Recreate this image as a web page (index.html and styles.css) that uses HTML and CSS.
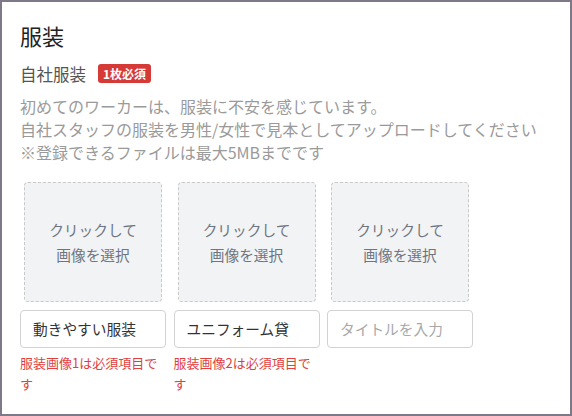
FILE: index.html
```html
<!DOCTYPE html>
<html lang="ja">
<head>
<meta charset="utf-8">
<link rel="stylesheet" href="styles.css">
</head>
<body>
<div class="frame">
  <h2 class="title">服装</h2>
  <div class="label-row">
    <span class="label">自社服装</span>
    <span class="badge">1枚必須</span>
  </div>
  <p class="desc">初めてのワーカーは、服装に不安を感じています。<br>自社スタッフの服装を男性/女性で見本としてアップロードしてください<br>※登録できるファイルは最大5MBまでです</p>
  <div class="grid">
    <div class="col">
      <div class="drop">クリックして<br>画像を選択</div>
      <input class="field" type="text" value="動きやすい服装">
      <div class="error">服装画像1は必須項目です</div>
    </div>
    <div class="col">
      <div class="drop">クリックして<br>画像を選択</div>
      <input class="field" type="text" value="ユニフォーム貸">
      <div class="error">服装画像2は必須項目です</div>
    </div>
    <div class="col">
      <div class="drop">クリックして<br>画像を選択</div>
      <input class="field" type="text" placeholder="タイトルを入力">
    </div>
  </div>
</div>
</body>
</html>
```

FILE: styles.css
```css
* { box-sizing: border-box; }
html, body { margin: 0; padding: 0; background: #fff; }
body {
  font-family: "Noto Sans CJK JP", "Noto Sans", sans-serif;
  color: #333;
}
.frame {
  width: 572px;
  height: 416px;
  border: 2px solid #7f7889;
  padding: 18px;
  overflow: hidden;
}
.title {
  margin: 0;
  font-size: 22px;
  font-weight: 400;
  line-height: 30px;
  color: #222;
}
.label-row {
  display: flex;
  align-items: center;
  height: 23px;
  margin-top: 12px;
}
.label {
  font-size: 16.5px;
  color: #555;
}
.badge {
  margin-left: 12px;
  background: #d63a36;
  color: #fff;
  font-size: 12px;
  font-weight: 700;
  height: 19px;
  line-height: 19px;
  padding: 0 5px;
  border-radius: 3px;
}
.desc {
  margin: 10px 0 0;
  font-size: 16px;
  line-height: 23.2px;
  color: #9a9a9a;
  white-space: nowrap;
}
.grid {
  margin-top: 17px;
  display: grid;
  grid-template-columns: repeat(3, 146px);
  column-gap: 7.5px;
}
.col {
  display: flex;
  flex-direction: column;
}
.drop {
  margin: 0 4px;
  height: 120px;
  background: #f2f3f5;
  border: 1px dashed #c9c9c9;
  border-radius: 4px;
  display: flex;
  align-items: center;
  justify-content: center;
  text-align: center;
  font-size: 14.7px;
  line-height: 25px;
  color: #6e7580;
}
.field {
  margin-top: 8px;
  width: 100%;
  height: 38px;
  border: 1px solid #d2d2d2;
  border-radius: 4px;
  padding: 0 12px;
  font-family: inherit;
  font-size: 14.7px;
  color: #333;
  background: #fff;
  outline: none;
}
.field::placeholder { color: #a8a8a8; }
.error {
  margin-top: 4px;
  font-size: 13px;
  line-height: 21px;
  color: #e0413f;
}
```
